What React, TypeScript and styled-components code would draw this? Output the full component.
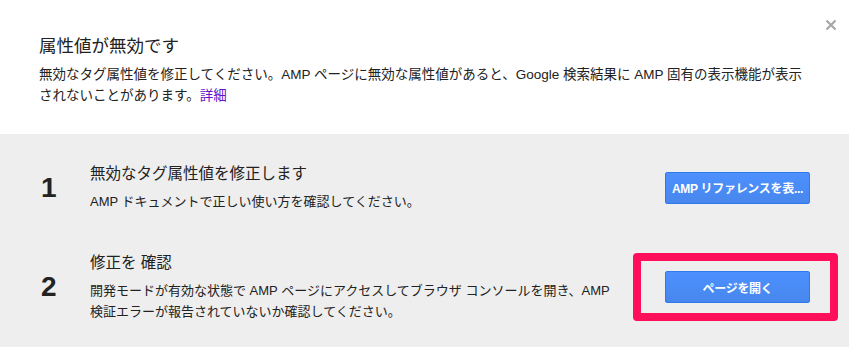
import React from "react";
import styled, { createGlobalStyle } from "styled-components";

const Global = createGlobalStyle`
  html, body { margin: 0; padding: 0; background: #ffffff; }
  body { font-family: "Liberation Sans", "Noto Sans CJK JP", sans-serif; color: #222; }
`;

const Dialog = styled.div`
  position: relative;
  width: 849px;
  height: 347px;
  background: #ffffff;
  display: flex;
  flex-direction: column;
`;

const Header = styled.header`
  padding: 34px 38px 28px 39px;
  display: flex;
  flex-direction: column;
  gap: 6px;
`;

const Title = styled.h1`
  margin: 0;
  font-size: 17.5px;
  line-height: 24px;
  font-weight: 400;
  color: #222;
`;

const Lead = styled.p`
  margin: 0;
  font-size: 13.5px;
  line-height: 21px;
  color: #222;
`;

const Link = styled.a`
  display: inline-block;
  color: #6611cc;
  text-decoration: none;
  line-height: 21px;
  vertical-align: top;
`;

const Close = styled.button`
  position: absolute;
  top: 19px;
  right: 12px;
  width: 12px;
  height: 12px;
  padding: 0;
  border: 0;
  background: transparent;
  display: flex;
  cursor: pointer;
`;

const Steps = styled.section`
  background: #eeeeee;
  padding: 29px 39px 26px 41px;
  display: flex;
  flex-direction: column;
  gap: 40px;
`;

const Step = styled.div`
  display: grid;
  grid-template-columns: 49px 1fr 145px;
  align-items: center;
`;

const Num = styled.div`
  font-family: "Liberation Sans", Arial, sans-serif;
  font-weight: 700;
  font-size: 28px;
  line-height: 32px;
  color: #222;
`;

const Body = styled.div`
  display: flex;
  flex-direction: column;
  gap: 6px;
  padding-right: 50px;
`;

const StepTitle = styled.div`
  font-size: 15.5px;
  line-height: 22px;
  color: #222;
`;

const StepText = styled.div`
  font-size: 13px;
  line-height: 21px;
  color: #222;
`;

const ButtonSlot = styled.div`
  position: relative;
  display: flex;
`;

const Button = styled.button`
  width: 145px;
  height: 32px;
  border: 1px solid #3079ed;
  border-radius: 2px;
  background: linear-gradient(#4d90fe, #4787ed);
  color: #fff;
  font-family: "Liberation Sans", "Noto Sans CJK JP", sans-serif;
  font-weight: 700;
  font-size: 12px;
  letter-spacing: -0.3px;
  padding: 0 4px;
  white-space: nowrap;
  cursor: pointer;
`;

const Highlight = styled.div`
  position: absolute;
  left: -32px;
  right: -28px;
  top: -18px;
  bottom: -18px;
  border: 8px solid #ff0f5a;
  border-radius: 4px;
  pointer-events: none;
`;

export default function App() {
  return (
    <>
      <Global />
      <Dialog>
        <Close aria-label="閉じる">
          <svg width="12" height="12" viewBox="0 0 12 12">
            <path d="M1.5 1.5 L10.5 10.5 M10.5 1.5 L1.5 10.5" stroke="#a6a6a6" strokeWidth="2.2" />
          </svg>
        </Close>
        <Header>
          <Title>属性値が無効です</Title>
          <Lead>
            無効なタグ属性値を修正してください。AMP ページに無効な属性値があると、Google 検索結果に AMP 固有の表示機能が表示されないことがあります。<Link href="#">詳細</Link>
          </Lead>
        </Header>
        <Steps>
          <Step>
            <Num>1</Num>
            <Body>
              <StepTitle>無効なタグ属性値を修正します</StepTitle>
              <StepText>AMP ドキュメントで正しい使い方を確認してください。</StepText>
            </Body>
            <ButtonSlot>
              <Button>AMP リファレンスを表...</Button>
            </ButtonSlot>
          </Step>
          <Step>
            <Num>2</Num>
            <Body>
              <StepTitle>修正を 確認</StepTitle>
              <StepText>
                開発モードが有効な状態で AMP ページにアクセスしてブラウザ コンソールを開き、AMP 検証エラーが報告されていないか確認してください。
              </StepText>
            </Body>
            <ButtonSlot>
              <Button>ページを開く</Button>
              <Highlight />
            </ButtonSlot>
          </Step>
        </Steps>
      </Dialog>
    </>
  );
}
